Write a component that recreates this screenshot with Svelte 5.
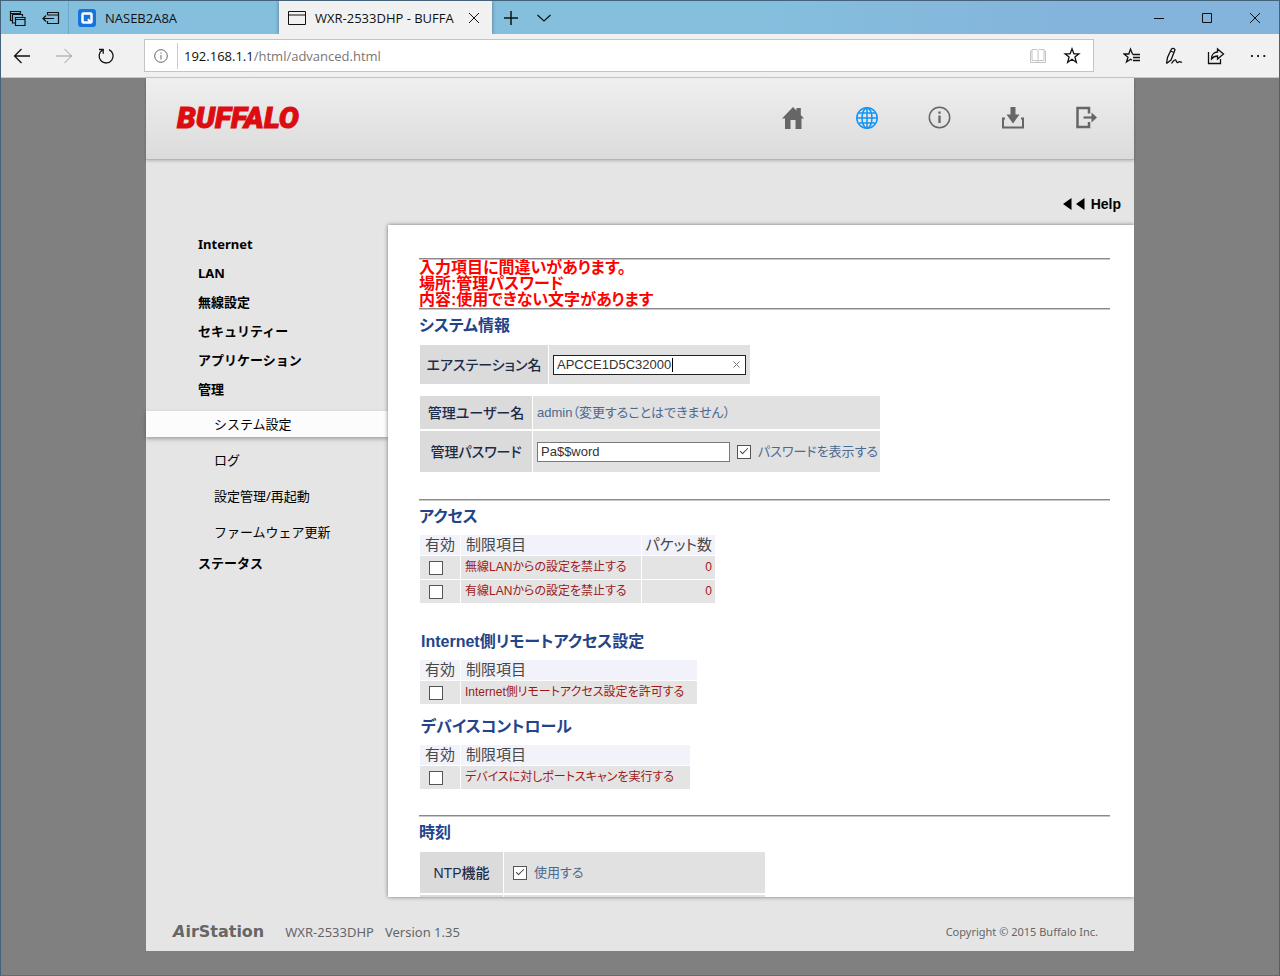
<script lang="ts">
  const menu = ['Internet', 'LAN', '無線設定', 'セキュリティー', 'アプリケーション', '管理'];
  const submenu = ['システム設定', 'ログ', '設定管理/再起動', 'ファームウェア更新'];
  const errors = [
    '入力項目に間違いがあります。',
    '場所:管理パスワード',
    '内容:使用できない文字があります',
  ];

  let current = $state('システム設定');
  let stationName = $state('APCCE1D5C32000');
  let password = $state('Pa$$word');
  let showPassword = $state(true);
  let useNtp = $state(true);

  let access = $state([
    { id: 'wlan', label: '無線LANからの設定を禁止する', packets: 0, on: false },
    { id: 'lan', label: '有線LANからの設定を禁止する', packets: 0, on: false },
  ]);
  let remote = $state([{ id: 'remote', label: 'Internet側リモートアクセス設定を許可する', on: false }]);
  let device = $state([{ id: 'scan', label: 'デバイスに対しポートスキャンを実行する', on: false }]);
</script>

{#snippet rules(rows: any[], kind: string)}
  <table class="rules {kind}">
    <thead>
      <tr>
        <th class="enable">有効</th>
        <th class="item">制限項目</th>
        {#if kind === 'packets'}<th class="count">パケット数</th>{/if}
      </tr>
    </thead>
    <tbody>
      {#each rows as row (row.id)}
        <tr>
          <td class="enable"><input type="checkbox" id={row.id} bind:checked={row.on} /></td>
          <td class="item"><label for={row.id}>{row.label}</label></td>
          {#if kind === 'packets'}<td class="count">{row.packets}</td>{/if}
        </tr>
      {/each}
    </tbody>
  </table>
{/snippet}

<div class="window">
  <div class="tabbar">
    <div class="tab-tools">
      <button aria-label="Tabs you've set aside">
        <svg width="18" height="18" viewBox="0 0 18 18"><path d="M4 11.500H1.500v-9h10v2M1.500 4.500h10M6 14H3.500V5.500h10v2M6.500 8.500h9.500v8h-9.500zM6.500 10.500h9.500" stroke-width="1.200" /></svg>
      </button>
      <button aria-label="Set these tabs aside">
        <svg width="18" height="18" viewBox="0 0 18 18"><path d="M5.500 6V3.500h11v11h-11V12M5.500 6h11M12 9.500H1M4 6.500l-3 3 3 3" stroke-width="1.200" /></svg>
      </button>
    </div>
    <button class="tab">
      <svg width="18" height="18" viewBox="0 0 18 18"><rect width="18" height="18" rx="3" fill="#1673de" stroke="none" /><rect x="4.500" y="4.500" width="9" height="9" rx="1" stroke="#fff" stroke-width="2.500" /><path d="M10 10l3 4" stroke="#fff" stroke-width="2" /></svg>
      <span>NASEB2A8A</span>
    </button>
    <div class="tab active">
      <svg width="18" height="18" viewBox="0 0 18 18"><path d="M.5 2.500h17v13H.5zM.5 6h17" /></svg>
      <span>WXR-2533DHP - BUFFA</span>
      <button aria-label="Close tab">
        <svg width="12" height="12" viewBox="0 0 12 12"><path d="M1 1l10 10M11 1L1 11" /></svg>
      </button>
    </div>
    <div class="tab-extra">
      <button aria-label="New tab"><svg width="14" height="14" viewBox="0 0 14 14"><path d="M7 0v14M0 7h14" stroke-width="1.500" /></svg></button>
      <button aria-label="Tab previews"><svg width="14" height="14" viewBox="0 0 14 14"><path d="M.5 4l6.500 6 6.500-6" stroke-width="1.200" /></svg></button>
    </div>
    <div class="window-buttons">
      <button aria-label="Minimize"><svg width="12" height="12" viewBox="0 0 12 12"><path d="M1 6.500h10" /></svg></button>
      <button aria-label="Maximize"><svg width="12" height="12" viewBox="0 0 12 12"><path d="M1.500 1.500h9v9h-9z" /></svg></button>
      <button aria-label="Close"><svg width="12" height="12" viewBox="0 0 12 12"><path d="M1 1l10 10M11 1L1 11" /></svg></button>
    </div>
  </div>

  <div class="toolbar">
    <div class="nav-buttons">
      <button aria-label="Back"><svg width="18" height="18" viewBox="0 0 18 18"><path d="M17 9H1.500M8.500 2L1.500 9l7 7" stroke-width="1.300" /></svg></button>
      <button aria-label="Forward" disabled><svg width="18" height="18" viewBox="0 0 18 18"><path d="M1 9h15.500M9.500 2l7 7-7 7" /></svg></button>
      <button aria-label="Refresh"><svg width="18" height="18" viewBox="0 0 18 18"><path d="M5.500 3A7 7 0 1 0 12 2.600M2 2.500h4.200v4.200" stroke-width="1.300" /></svg></button>
    </div>
    <div class="address">
      <span class="site-info"><svg width="14" height="14" viewBox="0 0 14 14"><circle cx="7" cy="7" r="6.300" /><path d="M7 6v4.500M7 3.500v1.300" /></svg></span>
      <span class="url"><b>192.168.1.1</b>/html/advanced.html</span>
      <button class="dim" aria-label="Reading view"><svg width="18" height="18" viewBox="0 0 18 18"><path d="M3 2.500h5l1 1 1-1h5v11h-5l-1 1-1-1H3zM9 3.500v11M3 4H1.500v11.500h15V4H15" /></svg></button>
      <button aria-label="Add to favorites"><svg width="18" height="18" viewBox="0 0 18 18"><path d="M9 1.800l1.900 5h5l-4 3.200 1.500 5.500L9 12.300l-4.400 3.200L6.100 10l-4-3.200h5z" stroke-width="1.300" /></svg></button>
    </div>
    <div class="actions">
      <button aria-label="Hub"><svg width="18" height="18" viewBox="0 0 18 18"><path d="M9.500 7L7.500 2 5.800 7H1l4 3.200L3.500 15l4-2.700 1.500 1M9.500 7.500H17M10 10.500h7M10 13.500h7" stroke-width="1.300" /></svg></button>
      <button aria-label="Add notes"><svg width="18" height="18" viewBox="0 0 18 18"><path d="M1.500 16.500l1-6L6.500 2q2-1.500 3.500.8L6 13l-4.500 3.500M5.500 4l3.500 1.500M6.500 16.500c2-3 4-4.500 4.500-3s1 3 2.500 1.500 2 1 3.500 0" stroke-width="1.300" /></svg></button>
      <button aria-label="Share"><svg width="18" height="18" viewBox="0 0 18 18"><path d="M1.500 5v11.500h12V12M4.500 12c0-5 3-7 6-7V2l6 5-6 5V9c-3 0-4 .5-6 3z" stroke-width="1.300" /></svg></button>
      <button aria-label="More"><svg width="18" height="18" viewBox="0 0 18 18"><path d="M2 9h1.800M8.200 9H10M14.400 9h1.800" stroke-width="1.800" /></svg></button>
    </div>
  </div>

  <div class="viewport">
    <div class="page">
      <header>
        <h1>BUFFALO</h1>
        <nav class="top-nav">
          <a href="#home" aria-label="Home"><svg width="24" height="24" viewBox="0 0 24 24"><path class="solid" d="M0 12.500L11 1l3.500 3.500V2h4.300v7L22 12.500h-2.500V23h-6V14h-5v9H3V12.500z" /></svg></a>
          <a class="active" href="#advanced" aria-label="Advanced"><svg width="24" height="24" viewBox="0 0 24 24"><circle cx="12" cy="12" r="10.200" /><ellipse cx="12" cy="12" rx="5" ry="10" /><path d="M12 2v20M2 12h20M3.500 7h17M3.500 17h17" /></svg></a>
          <a href="#status" aria-label="Status"><svg width="24" height="24" viewBox="0 0 24 24"><circle cx="11.500" cy="11.500" r="10.200" /><path d="M11.500 9.500v7.500M11.500 5.500v2.300" stroke-width="2.300" /></svg></a>
          <a href="#update" aria-label="Update"><svg width="24" height="24" viewBox="0 0 24 24"><path class="solid" d="M9.500 1h5v7.500h4L12 17.500 5.500 8.500h4z" /><path d="M4 12.500H2v9h20v-9h-2" stroke-width="2" /></svg></a>
          <a href="#logout" aria-label="Logout"><svg width="24" height="24" viewBox="0 0 24 24"><path d="M15 7.500V2H3.500v19H15v-5" stroke-width="2.500" /><path d="M9.500 11.500h9" stroke-width="2.200" /><path class="solid" d="M17.500 6.500l5.500 5-5.500 5z" /></svg></a>
        </nav>
      </header>

      <div class="help-row">
        <a href="#help"><svg width="22" height="12" viewBox="0 0 22 12"><path class="arrow" d="M8.500 0v12L0 6zM21.500 0v12L13 6z" /></svg>Help</a>
      </div>

      <div class="columns">
        <nav class="side">
          <ul>
            {#each menu as item}
              <li><a href="#{item}">{item}</a></li>
            {/each}
          </ul>
          <ul class="sub">
            {#each submenu as item}
              <li class:selected={item === current}>
                <a href="#{item}" onclick={() => current = item}>{item}</a>
              </li>
            {/each}
          </ul>
          <ul>
            <li><a href="#ステータス">ステータス</a></li>
          </ul>
        </nav>

        <main>
          <hr />
          <div class="errors">
            {#each errors as line}<p>{line}</p>{/each}
          </div>
          <hr />

          <section>
            <h2>システム情報</h2>
            <table class="settings station">
              <tbody>
                <tr>
                  <th><label for="station">エアステーション名</label></th>
                  <td>
                    <div class="field focused">
                      <input id="station" type="text" bind:value={stationName} />
                      <span class="caret"></span>
                      <button aria-label="Clear" onclick={() => stationName = ''}><svg width="7" height="7" viewBox="0 0 7 7"><path d="M.5.500l6 6M6.500.500l-6 6" /></svg></button>
                    </div>
                  </td>
                </tr>
              </tbody>
            </table>
            <table class="settings admin">
              <tbody>
                <tr class="low">
                  <th>管理ユーザー名</th>
                  <td>admin（変更することはできません）</td>
                </tr>
                <tr>
                  <th><label for="password">管理パスワード</label></th>
                  <td>
                    <div class="line">
                      <div class="field">
                        <input id="password" type={showPassword ? 'text' : 'password'} bind:value={password} />
                      </div>
                      <input type="checkbox" id="show" bind:checked={showPassword} />
                      <label for="show">パスワードを表示する</label>
                    </div>
                  </td>
                </tr>
              </tbody>
            </table>
          </section>

          <hr />
          <section>
            <h2>アクセス</h2>
            {@render rules(access, 'packets')}
            <h2 class="spaced">Internet側リモートアクセス設定</h2>
            {@render rules(remote, 'remote')}
            <h2 class="next">デバイスコントロール</h2>
            {@render rules(device, 'device')}
          </section>

          <hr />
          <section>
            <h2>時刻</h2>
            <table class="settings clock">
              <tbody>
                <tr>
                  <th>NTP機能</th>
                  <td>
                    <div class="line">
                      <input type="checkbox" id="ntp" bind:checked={useNtp} />
                      <label for="ntp">使用する</label>
                    </div>
                  </td>
                </tr>
                <tr><th></th><td></td></tr>
              </tbody>
            </table>
          </section>
        </main>
      </div>

      <footer>
        <strong><i>A</i>irStation</strong>
        <span>WXR-2533DHP</span>
        <span>Version 1.35</span>
        <small>Copyright © 2015 Buffalo Inc.</small>
      </footer>
    </div>
  </div>
</div>

<style>
  :global(body) {
    margin: 0;
  }

  .window {
    box-sizing: border-box;
    display: flex;
    flex-direction: column;
    height: 100vh;
    border: 1px solid #44637b;
    border-bottom-color: #6e6669;
    overflow: hidden;
    background: #808080;
    color: #111;
    font-family: 'Open Sans', 'Noto Sans CJK JP', sans-serif;
    font-size: 13px;
  }

  button {
    display: flex;
    align-items: center;
    justify-content: center;
    padding: 0;
    border: 0;
    background: none;
    color: inherit;
    font: inherit;
  }

  svg {
    display: block;
    flex: none;
    fill: none;
    stroke: currentColor;
  }

  a {
    color: inherit;
    text-decoration: none;
  }

  /* browser chrome */
  .tabbar {
    display: flex;
    flex: none;
    height: 33px;
    background: linear-gradient(90deg, #84bfde 0%, #84bfde 60%, #84b3db 85%, #84b3db 100%);
  }

  .tab-tools {
    display: flex;
    align-items: center;
    gap: 15px;
    padding: 0 8px;
    border-right: 1px solid #6ba7c8;
  }

  .tab {
    display: flex;
    align-items: center;
    justify-content: flex-start;
    gap: 9px;
    width: 210px;
    padding: 0 9px;
    box-sizing: border-box;
    white-space: nowrap;
  }

  .tab.active {
    width: 213px;
    background: #f1f1f1;
    box-shadow: 0 0 4px rgba(0, 0, 0, 0.4);
  }

  .tab.active button {
    margin-left: auto;
    padding-right: 3px;
  }

  .tab-extra {
    display: flex;
    gap: 19px;
    padding-left: 12px;
  }

  .window-buttons {
    display: flex;
    gap: 36px;
    margin-left: auto;
    padding-right: 18px;
  }

  .toolbar {
    display: flex;
    align-items: center;
    flex: none;
    height: 44px;
    border-bottom: 1px solid #c8c8c8;
    box-sizing: border-box;
    background: #f1f1f1;
  }

  .nav-buttons {
    display: flex;
    gap: 24px;
    width: 143px;
    padding-left: 12px;
    box-sizing: border-box;
  }

  .nav-buttons button:disabled {
    color: #999;
  }

  .address {
    display: flex;
    align-items: center;
    flex: 1;
    gap: 16px;
    height: 33px;
    padding-right: 12px;
    border: 1px solid #c4c4c4;
    box-sizing: border-box;
    background: #fff;
  }

  .site-info {
    display: flex;
    align-items: center;
    height: 26px;
    padding: 0 9px;
    border-right: 1px solid #ccc;
    color: #666;
  }

  .url {
    flex: 1;
    margin-left: -10px;
    color: #777;
  }

  .url b {
    color: #111;
    font-weight: 400;
  }

  .dim {
    color: #c4c4c4;
  }

  .actions {
    display: flex;
    gap: 24px;
    padding: 0 12px 0 29px;
  }

  /* router page */
  .viewport {
    display: flex;
    justify-content: center;
    flex: 1;
    min-height: 0;
    padding-bottom: 24px;
  }

  .page {
    display: flex;
    flex-direction: column;
    width: 100%;
    max-width: 988px;
    background: #e5e5e5;
  }

  header {
    display: flex;
    align-items: center;
    justify-content: space-between;
    flex: none;
    height: 82px;
    padding: 0 36px 2px 31px;
    border-bottom: 1px solid #b4b4b4;
    box-sizing: border-box;
    background: linear-gradient(#efefef, #dbdbdb);
    box-shadow: 0 1px 3px rgba(0, 0, 0, 0.2);
  }

  h1 {
    margin: 0;
    color: #dc0c10;
    font: italic 900 30px Roboto, sans-serif;
    -webkit-text-stroke: 1px #dc0c10;
  }

  .top-nav {
    display: flex;
    gap: 49px;
    color: #666;
  }

  .top-nav svg {
    stroke-width: 1.5;
  }

  .top-nav .active {
    color: #1294f5;
  }

  .solid,
  .arrow {
    fill: currentColor;
    stroke: none;
  }

  .help-row {
    display: flex;
    justify-content: flex-end;
    flex: none;
    height: 65px;
    padding: 34px 13px 0 0;
    box-sizing: border-box;
  }

  .help-row a {
    display: flex;
    align-items: center;
    gap: 6px;
    height: 20px;
    color: #000;
    font: bold 14px 'Liberation Sans', sans-serif;
  }

  .columns {
    display: flex;
    flex: 1;
    min-height: 0;
  }

  .side {
    width: 242px;
    flex: none;
    padding-top: 5px;
    box-sizing: border-box;
    color: #000;
    font-family: 'Noto Sans', 'Noto Sans CJK JP', sans-serif;
  }

  .side ul {
    margin: 0;
    padding: 0;
    list-style: none;
  }

  .side li {
    padding-left: 52px;
    font-weight: 700;
    line-height: 29px;
  }

  .side .sub {
    display: flex;
    flex-direction: column;
    gap: 10px;
    padding: 7px 0 4px;
  }

  .side .sub li {
    padding-left: 68px;
    font-weight: 400;
    line-height: 26px;
  }

  .sub .selected {
    background: #fcfcfc;
    box-shadow: 0 2px 4px rgba(0, 0, 0, 0.3);
  }

  main {
    flex: 1;
    min-width: 0;
    padding: 33px 24px 0 31px;
    overflow: hidden;
    background: #fff;
    box-shadow: 0 0 4px rgba(0, 0, 0, 0.5);
    color: #4b6a90;
    font-family: 'Liberation Sans', 'Noto Sans CJK JP', sans-serif;
    font-feature-settings: 'palt';
    clip-path: inset(-5px 0 -5px -5px);
  }

  hr {
    height: 2px;
    margin: 0;
    border: 0;
    border-top: 1px solid #8a8a8a;
    box-sizing: border-box;
    background: #c8c8c8;
  }

  .errors {
    color: #f00;
    font-size: 16px;
    font-weight: 700;
    line-height: 16px;
  }

  .errors p {
    margin: 0;
  }

  section {
    padding: 6px 0 25px;
  }

  h2 {
    margin: 0 0 7px;
    color: #24448a;
    font-size: 16px;
    font-weight: 700;
    line-height: 20px;
  }

  h2.spaced {
    margin-top: 28px;
    padding-left: 2px;
  }

  h2.next {
    margin-top: 12px;
    padding-left: 2px;
  }

  table {
    border-spacing: 1px;
    white-space: nowrap;
  }

  th,
  td {
    padding: 0;
    line-height: 20px;
  }

  .settings {
    border-spacing: 1px 2px;
  }

  .settings + .settings {
    margin-top: 8px;
  }

  .settings tr {
    height: 41px;
  }

  .settings .low {
    height: 33px;
  }

  .settings th {
    background: #dbdbdb;
    color: #1c2c48;
    font-size: 14px;
    font-weight: 500;
  }

  .settings td {
    padding: 0 2px 0 4px;
    background: #e1e1e1;
  }

  .station tr {
    height: 39px;
  }

  .station th {
    width: 128px;
  }

  .station td {
    width: 195px;
  }

  .admin th {
    width: 112px;
  }

  .admin td {
    width: 340px;
  }

  .clock th {
    width: 83px;
  }

  .clock td {
    width: 243px;
    padding: 0 9px;
  }

  .line {
    display: flex;
    align-items: center;
    gap: 7px;
  }

  .field {
    display: flex;
    position: relative;
    width: 193px;
    height: 20px;
    border: 1px solid #7a7a7a;
    box-sizing: border-box;
    background: #fff;
  }

  .field.focused {
    border-color: #222;
  }

  .field input {
    width: 100%;
    min-width: 0;
    padding: 0 3px;
    border: 0;
    outline: 0;
    background: none;
    color: #333;
    font: 13px 'Liberation Sans', sans-serif;
  }

  .caret {
    position: absolute;
    top: 2px;
    left: 118px;
    width: 1px;
    height: 14px;
    background: #000;
  }

  .field button {
    padding: 0 5px;
    color: #777;
  }

  input[type='checkbox'] {
    appearance: none;
    display: block;
    flex: none;
    width: 14px;
    height: 14px;
    margin: 0;
    border: 1px solid #555;
    background: #fff;
  }

  input[type='checkbox']:checked::after {
    content: '';
    display: block;
    width: 7px;
    height: 3px;
    margin: 2px 0 0 2px;
    border: solid #444;
    border-width: 0 0 1px 1px;
    transform: rotate(-45deg);
  }

  .rules th {
    padding: 0 5px;
    background: #f1f2fa;
    color: #484848;
    font-size: 15px;
    font-weight: 400;
    line-height: 20px;
    text-align: left;
  }

  .rules td {
    padding: 0 4px;
    background: #e4e4e4;
    color: #a01818;
    font-size: 12px;
    line-height: 23px;
  }

  .rules .enable {
    width: 30px;
  }

  .rules .item {
    width: 170px;
  }

  .rules .count {
    width: 67px;
    padding: 0 3px;
    text-align: right;
  }

  .rules.remote .item {
    width: 226px;
  }

  .rules.device .item {
    width: 219px;
  }

  td.enable input {
    margin-left: 5px;
  }

  footer {
    display: flex;
    align-items: center;
    flex: none;
    gap: 11px;
    height: 54px;
    padding: 15px 36px 0 27px;
    box-sizing: border-box;
    color: #666;
    font-family: 'Noto Sans', sans-serif;
  }

  footer strong {
    margin-right: 10px;
    font: bold 16px 'DejaVu Sans', sans-serif;
  }

  footer small {
    margin-left: auto;
    font-size: 11px;
  }
</style>
